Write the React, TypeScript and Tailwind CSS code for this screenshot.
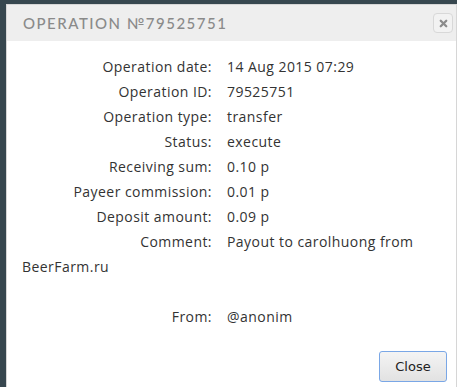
import { X } from 'lucide-react';

const ROWS: [string, string][] = [
    ['Operation date:', '14 Aug 2015 07:29'],
    ['Operation ID:', '79525751'],
    ['Operation type:', 'transfer'],
    ['Status:', 'execute'],
    ['Receiving sum:', '0.10 р'],
    ['Payeer commission:', '0.01 р'],
    ['Deposit amount:', '0.09 р'],
    ['Comment:', 'Payout to carolhuong from BeerFarm.ru'],
];

const Row = ({ label, value }: { label: string; value: string }) => (
    <div>
        <span className="mr-[15px] inline-block w-[190px] text-right">{label}</span>
        {value}
    </div>
);

const App = () => {
    return (
        <div className="h-[387px] w-[457px] overflow-hidden bg-[#37474f] pl-[6px] pt-[4px]">
            <div className="flex h-[400px] flex-col border border-[#d6d6d6] bg-white">
                {/* Header */}
                <div className="flex h-[36px] items-center justify-between bg-[#eeeeee] pl-[16px] pr-[3px]">
                    <h1 className="font-['Lato',sans-serif] text-[15px] font-medium uppercase tracking-[0.1em] text-[#8a8a8a]">
                        Operation №79525751
                    </h1>
                    <button className="flex h-[20px] w-[20px] items-center justify-center rounded-[4px] border border-[#d8d8d8] bg-[#f2f2f2] text-[#8c8c8c]">
                        <X size={11} strokeWidth={5} />
                    </button>
                </div>

                {/* Body */}
                <div className="px-[15px] pt-[13px] font-['Open_Sans',sans-serif] text-[14px] leading-[25px] tracking-[0.032em] text-[#333333]">
                    {ROWS.map(([l, v]) => <Row key={l} label={l} value={v} />)}
                    <div className="h-[25px]" />
                    <Row label="From:" value="@anonim" />
                </div>

                <div className="flex justify-end pr-[9px] pt-[22px]">
                    <button className="h-[31px] w-[68px] rounded-[3px] border border-[#7aa7e6] bg-gradient-to-b from-[#f4f4f4] to-[#e2e2e2] font-['DejaVu_Sans',sans-serif] text-[13px] text-[#222]">
                        Close
                    </button>
                </div>
            </div>
        </div>
    );
};

export default App;
